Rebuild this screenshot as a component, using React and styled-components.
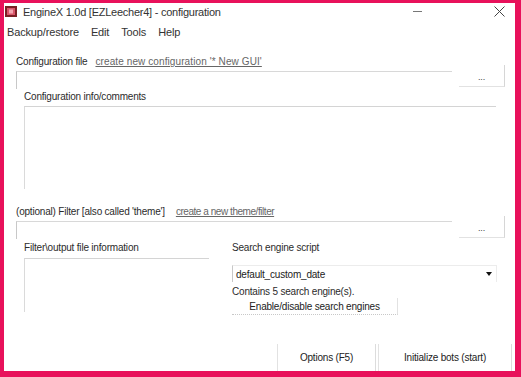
import React from 'react';
import styled, { createGlobalStyle } from 'styled-components';

const GlobalStyle = createGlobalStyle`
	html, body {
		margin: 0;
		padding: 0;
		background: #e8115b;
	}
	* {
		box-sizing: border-box;
	}
`;

const Window = styled.div`
	width: 521px;
	height: 377px;
	display: flex;
	flex-direction: column;
	background: #fff;
	border-style: solid;
	border-color: #e8115b;
	border-width: 3px 6px 6px 4px;
	font-family: "Liberation Sans", Arial, sans-serif;
	color: #2b2b2b;
	overflow: hidden;
`;

const TitleBar = styled.div`
	height: 17px;
	display: flex;
	align-items: center;
	padding-left: 1px;
	font-size: 11px;
	letter-spacing: -0.25px;
	color: #333;
`;

const AppIcon = styled.svg`
	width: 12px;
	height: 11px;
	margin-right: 6px;
	flex: none;
`;

const TitleText = styled.span`
	flex: 1;
	white-space: nowrap;
`;

const Minimize = styled.span`
	width: 9px;
	height: 1px;
	background: #777;
	margin-right: 72px;
`;

const CloseIcon = styled.svg`
	width: 11px;
	height: 11px;
	margin-right: 10px;
`;

const MenuBar = styled.div`
	height: 24px;
	display: flex;
	align-items: center;
	gap: 12px;
	padding-left: 3px;
	font-size: 11px;
	letter-spacing: -0.15px;
	color: #333;
`;

const Body = styled.div`
	flex: 1;
	display: flex;
	flex-direction: column;
	padding: 0 8px 0 12px;
	font-size: 10px;
	letter-spacing: -0.2px;
`;

const LabelRow = styled.div`
	display: flex;
	align-items: center;
	height: 12px;
	line-height: 12px;
	margin-top: ${p => p.$top || 0}px;
	white-space: nowrap;
`;

const LinkText = styled.span`
	margin-left: ${p => p.$gap}px;
	color: #666;
	text-decoration: underline;
	letter-spacing: ${p => p.$spacing}px;
`;

const EditRow = styled.div`
	display: flex;
	align-items: flex-start;
	margin-top: ${p => p.$top}px;
`;

const Edit = styled.div`
	width: 436px;
	height: 18px;
	margin-top: ${p => p.$offset}px;
	border-top: 1px solid #d8d8d8;
	border-left: 1px solid #c8c8c8;
`;

const BrowseButton = styled.div`
	width: 46px;
	height: 22px;
	margin-left: 7px;
	display: flex;
	align-items: center;
	justify-content: center;
	padding-top: 3px;
	border-right: 1px solid #d6d6d6;
	border-bottom: 1px solid #e2e2e2;
	color: #444;
	font-size: 9px;
`;

const Group = styled.div`
	display: flex;
	flex-direction: column;
	margin-top: ${p => p.$top || 0}px;
	margin-left: ${p => p.$left || 0}px;
	width: ${p => p.$width}px;
`;

const GroupLabel = styled.div`
	height: 12px;
	line-height: 12px;
	white-space: nowrap;
`;

const GroupBox = styled.div`
	margin-top: ${p => p.$gap}px;
	height: ${p => p.$height}px;
	border-top: 1px solid #d4d4d4;
	border-left: 1px solid #dadada;
`;

const Columns = styled.div`
	display: flex;
	margin-top: 3px;
`;

const ScriptColumn = styled.div`
	display: flex;
	flex-direction: column;
	margin-left: 23px;
	width: 265px;
`;

const Combo = styled.div`
	margin-top: 11px;
	height: 17px;
	display: flex;
	align-items: center;
	justify-content: space-between;
	padding: 0 3px 0 3px;
	border-top: 1px solid #ececec;
	border-left: 1px solid #c8c8c8;
	border-right: 1px solid #ececec;
	color: #222;
`;

const Arrow = styled.span`
	width: 0;
	height: 0;
	border-left: 3.5px solid transparent;
	border-right: 3.5px solid transparent;
	border-top: 4px solid #111;
	margin-right: 1px;
`;

const InfoText = styled.div`
	margin-top: 4px;
	height: 12px;
	line-height: 12px;
`;

const SmallButton = styled.div`
	width: 166px;
	height: 17px;
	display: flex;
	align-items: center;
	justify-content: center;
	border-right: 1px solid #e2e2e2;
	border-bottom: 1px dotted #c8c8c8;
	color: #222;
`;

const ButtonBar = styled.div`
	margin-top: auto;
	display: flex;
	justify-content: flex-end;
	padding-right: 3px;
	gap: 2px;
`;

const Button = styled.div`
	width: ${p => p.$width}px;
	height: 27px;
	display: flex;
	align-items: center;
	justify-content: center;
	border-left: 1px solid #e2e2e2;
	border-right: 1px solid #dcdcdc;
	color: #222;
	font-size: 10px;
	letter-spacing: -0.2px;
`;

const App = () => (
	<>
		<GlobalStyle />
		<Window>
			<TitleBar>
				<AppIcon viewBox="0 0 12 11">
					<rect x="0" y="0" width="12" height="11" fill="#7a1f24" />
					<rect x="2" y="2" width="8" height="7" fill="#d9566a" />
					<rect x="4" y="3.5" width="4" height="4" fill="#f2a6b0" />
				</AppIcon>
				<TitleText>EngineX 1.0d [EZLeecher4] - configuration</TitleText>
				<Minimize />
				<CloseIcon viewBox="0 0 11 11">
					<path d="M0.5 0.5 L10.5 10.5 M10.5 0.5 L0.5 10.5" stroke="#444" strokeWidth="1" />
				</CloseIcon>
			</TitleBar>
			<MenuBar>
				<span>Backup/restore</span>
				<span>Edit</span>
				<span>Tools</span>
				<span>Help</span>
			</MenuBar>
			<Body>
				<LabelRow $top={12}>
					Configuration file
					<LinkText $gap={8} $spacing={0.1}>create new configuration '* New GUI'</LinkText>
				</LabelRow>
				<EditRow $top={-3}>
					<Edit $offset={6} />
					<BrowseButton>...</BrowseButton>
				</EditRow>
				<Group $top={2} $left={8} $width={472}>
					<GroupLabel>Configuration info/comments</GroupLabel>
					<GroupBox $gap={3} $height={83} />
				</Group>
				<LabelRow $top={17}>
					(optional) Filter [also called 'theme']
					<LinkText $gap={11} $spacing={-0.45}>create a new theme/filter</LinkText>
				</LabelRow>
				<EditRow $top={-2}>
					<Edit $offset={5} />
					<BrowseButton>...</BrowseButton>
				</EditRow>
				<Columns>
					<Group $left={8} $width={185}>
						<GroupLabel>Filter\output file information</GroupLabel>
						<GroupBox $gap={4} $height={54} />
					</Group>
					<ScriptColumn>
						<GroupLabel>Search engine script</GroupLabel>
						<Combo>
							<span>default_custom_date</span>
							<Arrow />
						</Combo>
						<InfoText>Contains 5 search engine(s).</InfoText>
						<SmallButton>Enable/disable search engines</SmallButton>
					</ScriptColumn>
				</Columns>
			</Body>
			<ButtonBar>
				<Button $width={99}>Options (F5)</Button>
				<Button $width={134}>Initialize bots (start)</Button>
			</ButtonBar>
		</Window>
	</>
);

export default App;
